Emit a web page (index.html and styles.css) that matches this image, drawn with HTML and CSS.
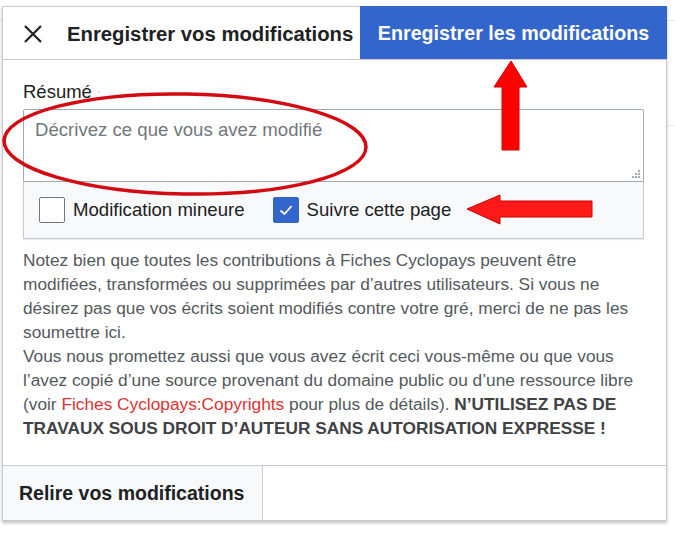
FILE: index.html
```html
<!DOCTYPE html>
<html lang="fr">
<head>
<meta charset="utf-8">
<title>Enregistrer vos modifications</title>
<link rel="stylesheet" href="styles.css">
</head>
<body>
<div class="page">
  <div class="dialog">
    <div class="head">
      <button class="close" aria-label="Fermer">
        <svg width="20" height="20" viewBox="0 0 20 20"><path d="M2 2 L18 18 M18 2 L2 18" stroke="#202122" stroke-width="2.2" fill="none"/></svg>
      </button>
      <div class="title">Enregistrer vos modifications</div>
      <button class="save">Enregistrer les modifications</button>
    </div>
    <div class="body">
      <label class="label">Résumé <span class="colon">:</span></label>
      <div class="summary">
        <div class="textarea">
          <span class="placeholder">Décrivez ce que vous avez modifié</span>
          <svg class="grip" width="8" height="8" viewBox="0 0 8 8"><g fill="#a2a9b1"><rect x="6" y="0" width="2" height="2"/><rect x="3" y="3" width="2" height="2"/><rect x="6" y="3" width="2" height="2"/><rect x="0" y="6" width="2" height="2"/><rect x="3" y="6" width="2" height="2"/><rect x="6" y="6" width="2" height="2"/></g></svg>
        </div>
        <div class="checks">
          <span class="check"><span class="box"></span>Modification mineure</span>
          <span class="check"><span class="box on"><svg width="18" height="18" viewBox="0 0 18 18"><path d="M3.5 9.5 L7.5 13 L14.5 5" stroke="#fff" stroke-width="1.8" fill="none"/></svg></span>Suivre cette page</span>
        </div>
      </div>
      <p class="notice">Notez bien que toutes les contributions à Fiches Cyclopays peuvent être modifiées, transformées ou supprimées par d’autres utilisateurs. Si vous ne désirez pas que vos écrits soient modifiés contre votre gré, merci de ne pas les soumettre ici.<br>Vous nous promettez aussi que vous avez écrit ceci vous-même ou que vous l’avez copié d’une source provenant du domaine public ou d’une ressource libre (voir <a class="link" href="#">Fiches Cyclopays:Copyrights</a> pour plus de détails). <b>N’UTILISEZ PAS DE TRAVAUX SOUS DROIT D’AUTEUR SANS AUTORISATION EXPRESSE !</b></p>
    </div>
    <div class="foot">
      <button class="review">Relire vos modifications</button>
    </div>
  </div>
  <svg class="marks" width="675" height="536" viewBox="0 0 675 536">
    <ellipse cx="185" cy="144" rx="181" ry="50" fill="none" stroke="#d40a12" stroke-width="3.5" transform="rotate(1 185 144)"/>
    <path d="M511 61 L527 87 L519 87 L519 150 L502 150 L502 87 L494 87 Z" fill="#ff0000" stroke="#d00000" stroke-width="1"/>
    <path d="M467 209 L500 195 L500 201 L592 201 L592 217 L500 217 L500 224 Z" fill="#ff1a1a" stroke="#d00000" stroke-width="1"/>
  </svg>
</div>
</body>
</html>
```
FILE: styles.css
```css
html, body {
  margin: 0;
  padding: 0;
  background: #ffffff;
}
body {
  font-family: "Liberation Sans", Arial, sans-serif;
  color: #202122;
}
.page {
  position: relative;
  width: 675px;
  height: 536px;
  overflow: hidden;
  padding: 6px 0 0 2px;
  box-sizing: border-box;
  background: linear-gradient(to bottom, #fff 0, #fff 20px, #eaecf0 20px, #eaecf0 21px, #fff 21px, #fff 125px, #eaecf0 125px, #eaecf0 126px, #fff 126px);
}
.dialog {
  width: 665px;
  box-sizing: border-box;
  border: 1px solid #c8ccd1;
  background: #fff;
  box-shadow: 0 2px 3px rgba(0,0,0,0.25);
}
.head {
  display: flex;
  align-items: stretch;
  height: 53px;
  margin: -1px -1px 0 0;
  border-bottom: 1px solid #c8ccd1;
}
.close {
  width: 64px;
  border: 0;
  background: transparent;
  padding: 3px 0 0 20px;
  display: flex;
  align-items: center;
  justify-content: flex-start;
}
.title {
  flex: 1;
  display: flex;
  align-items: center;
  padding-top: 3px;
  font-weight: bold;
  font-size: 20.3px;
  color: #202122;
  white-space: nowrap;
}
.save {
  width: 307px;
  border: 0;
  background: #3366cc;
  color: #fff;
  font-family: "Liberation Sans", Arial, sans-serif;
  font-weight: bold;
  font-size: 19.7px;
  padding: 2px 0 0 0;
  white-space: nowrap;
}
.body {
  padding: 21px 22px 25px 20px;
}
.label {
  display: block;
  font-size: 18.5px;
  line-height: 22px;
  margin-bottom: 4px;
}
.colon {
  color: #c8ccd1;
  font-size: 12px;
}
.textarea {
  position: relative;
  height: 73px;
  box-sizing: border-box;
  border: 1px solid #a2a9b1;
  border-radius: 2px 2px 0 0;
  padding: 9px 11px;
}
.placeholder {
  font-size: 18.6px;
  color: #72777d;
}
.grip {
  position: absolute;
  right: 3px;
  bottom: 3px;
}
.checks {
  display: flex;
  align-items: center;
  height: 57px;
  box-sizing: border-box;
  border: 1px solid #c8ccd1;
  border-top: 0;
  background: #f8f9fa;
  padding: 0 14px 0 15px;
  box-shadow: 0 1px 1px rgba(0,0,0,0.08);
}
.check {
  display: flex;
  align-items: center;
  gap: 8px;
  font-size: 18.6px;
  color: #202122;
  margin-right: 28px;
}
.box {
  width: 26px;
  height: 26px;
  box-sizing: border-box;
  border: 1px solid #72777d;
  border-radius: 2px;
  background: #fff;
  display: flex;
  align-items: center;
  justify-content: center;
}
.box.on {
  background: #3366cc;
  border-color: #3366cc;
}
.notice {
  margin: 9px 0 0;
  font-size: 17.3px;
  line-height: 24px;
  color: #54595d;
}
.link {
  color: #d33;
  text-decoration: none;
}
.notice b {
  color: #404244;
}
.foot {
  display: flex;
  height: 54px;
  border-top: 1px solid #c8ccd1;
}
.review {
  width: 260px;
  border: 0;
  border-right: 1px solid #c8ccd1;
  background: #f8f9fa;
  font-family: "Liberation Sans", Arial, sans-serif;
  font-weight: bold;
  font-size: 19.5px;
  color: #202122;
  text-align: left;
  padding: 0 0 0 16px;
  white-space: nowrap;
}
.marks {
  position: absolute;
  left: 0;
  top: 0;
  pointer-events: none;
}
```
